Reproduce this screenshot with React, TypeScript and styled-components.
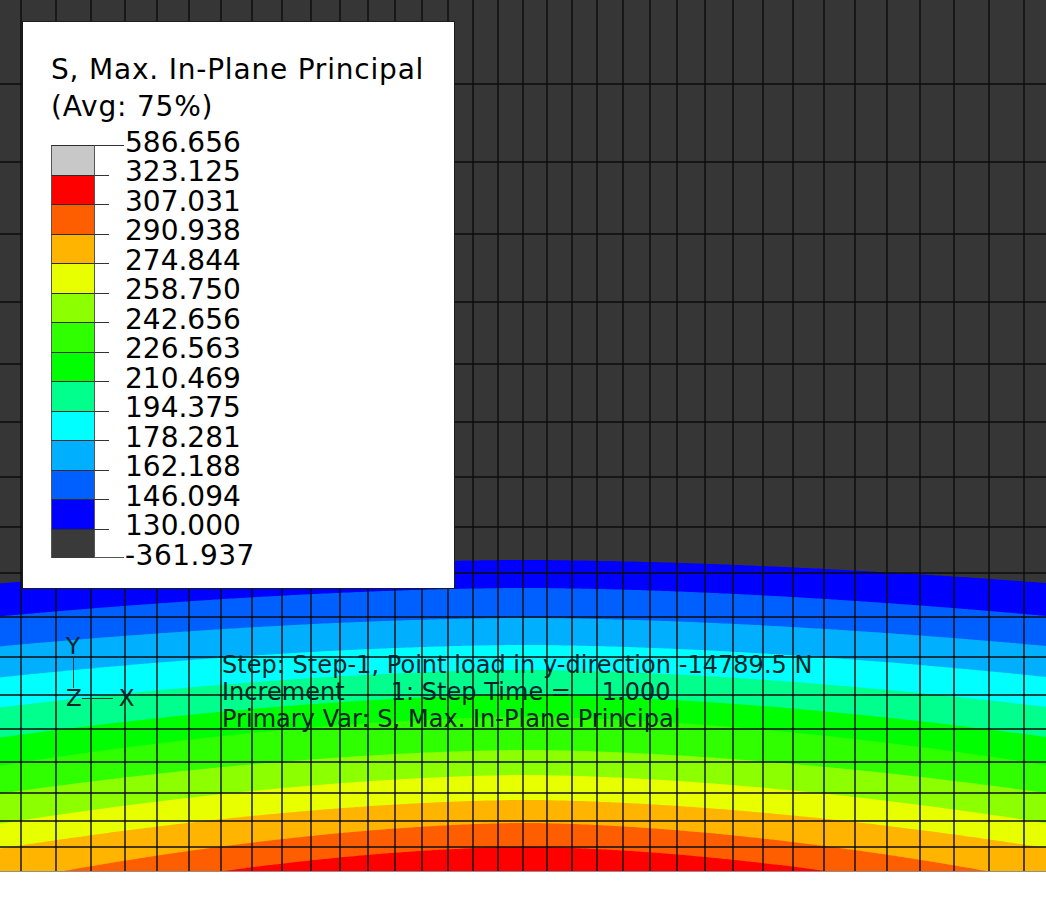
import React from "react";
import styled, { createGlobalStyle } from "styled-components";

const Global = createGlobalStyle`
  html, body { margin: 0; padding: 0; background: #fff; }
  body { font-family: "DejaVu Sans", "Liberation Sans", sans-serif; }
`;

const Page = styled.div`
  width: 1046px;
  height: 899px;
  background: #fff;
  overflow: hidden;
`;

const Viewport = styled.div`
  position: relative;
  width: 1046px;
  height: 872px;
  border-bottom: 1px solid #8f8f8f;
  box-sizing: border-box;
  background: #363636;
  overflow: hidden;
`;

const Plot = styled.svg`
  display: block;
  width: 1046px;
  height: 871px;
`;

const Legend = styled.section`
  position: absolute;
  left: 22px;
  top: 21px;
  width: 433px;
  height: 568px;
  box-sizing: border-box;
  background: #fff;
  border: 1px solid #1c1c1c;
  padding: 29px 0 0 28px;
  color: #000;
`;

const Title = styled.h1`
  margin: 0;
  font-size: 28px;
  font-weight: 400;
  line-height: 37px;
  white-space: nowrap;
  letter-spacing: 0.8px;
`;

const Scale = styled.div`
  display: flex;
  margin-top: 2.5px;
`;

const Bar = styled.div`
  position: relative;
  flex: none;
  width: 44px;
  height: 413px;
  margin-top: 17.5px;
  display: flex;
  flex-direction: column;
  box-shadow: inset 0 -1px 0 #555;

  &::after {
    content: "";
    position: absolute;
    left: 100%;
    bottom: 0;
    width: 29px;
    height: 1px;
    background: #555;
  }
`;

const Swatch = styled.div<{ $fill: string; $long: boolean }>`
  position: relative;
  flex: none;
  height: 29.5px;
  box-sizing: border-box;
  background: ${(p) => p.$fill};
  border-left: 1px solid #555;
  border-right: 1px solid #555;
  border-top: 1px solid #2c2c2c;

  &::after {
    content: "";
    position: absolute;
    left: calc(100% + 1px);
    top: -1px;
    width: ${(p) => (p.$long ? "29px" : "14px")};
    height: 1px;
    background: #333;
  }
`;

const Labels = styled.ol`
  list-style: none;
  margin: 0 0 0 30px;
  padding: 0;
  font-size: 28px;
  line-height: 29.5px;
`;

const MinLabel = styled.li`
  letter-spacing: 0.5px;
`;

const Info = styled.div`
  position: absolute;
  left: 222px;
  top: 652px;
  font-size: 24px;
  line-height: 27px;
  white-space: pre;
  color: #05242a;
  letter-spacing: 0.04px;
`;

const Triad = styled.div`
  position: absolute;
  left: 66px;
  top: 636px;
  display: flex;
  flex-direction: column;
  align-items: flex-start;
  font-size: 23px;
  line-height: 20px;
  color: #05242a;
`;

const TriadStem = styled.div`
  width: 1px;
  height: 32px;
  margin-left: 7px;
  background: #0d3a3a;
`;

const TriadBase = styled.div`
  display: flex;
  align-items: center;
`;

const TriadArm = styled.div`
  width: 31px;
  height: 1px;
  margin: 0 6px 0 0;
  background: #0d3a3a;
`;

const bandColors = [
  "#0000ff", "#0060ff", "#00b0ff", "#00ffff", "#00ff8c", "#00ff00",
  "#30ff00", "#8cff00", "#e8ff00", "#ffb400", "#ff5e00", "#ff0000",
];
const centerY = [560, 588, 618, 645, 670, 695, 717, 750, 775, 800, 823, 847];
const edgeY = [583, 616, 646, 677, 707, 737, 765, 793, 823, 848, 882, 908];

const CX = 525;
const HALF = 521;

function bandPath(i: number): string {
  const pts: string[] = [];
  for (let x = 0; x <= 1046; x += 2) {
    const u = Math.abs(x - CX) / HALF;
    const y = centerY[i] + (edgeY[i] - centerY[i]) * Math.pow(u, 1.7);
    pts.push(`${x},${y.toFixed(1)}`);
  }
  pts.push("1046,872", "0,872");
  return `M${pts.join("L")}Z`;
}

const verticals = [
  21, 56, 91, 125, 157, 189, 221, 252, 282, 311, 340, 368, 395, 422, 448, 473,
  498, 523, 547, 572, 597, 623, 650, 677, 705, 733, 763, 793, 824, 855, 887,
  920, 954, 989, 1024,
];
const horizontals = [
  84, 162, 234, 302, 364, 422, 477, 527, 573, 617, 657, 695, 729, 762, 793,
  821, 847,
];

const levels = [
  { value: "586.656", fill: "#c8c8c8" },
  { value: "323.125", fill: "#ff0000" },
  { value: "307.031", fill: "#ff5e00" },
  { value: "290.938", fill: "#ffb400" },
  { value: "274.844", fill: "#e8ff00" },
  { value: "258.750", fill: "#8cff00" },
  { value: "242.656", fill: "#30ff00" },
  { value: "226.563", fill: "#00ff00" },
  { value: "210.469", fill: "#00ff8c" },
  { value: "194.375", fill: "#00ffff" },
  { value: "178.281", fill: "#00b0ff" },
  { value: "162.188", fill: "#0060ff" },
  { value: "146.094", fill: "#0000ff" },
  { value: "130.000", fill: "#3a3a3a" },
];

export default function App() {
  return (
    <Page>
      <Global />
      <Viewport>
        <Plot viewBox="0 0 1046 871" aria-hidden="true">
          {bandColors.map((c, i) => (
            <path key={c} d={bandPath(i)} fill={c} />
          ))}
          <g stroke="#0c0c0c" strokeWidth="1.4">
            {verticals.map((x) => (
              <line key={x} x1={x} x2={x} y1={0} y2={871} />
            ))}
            {horizontals.map((y) => (
              <line key={y} x1={0} x2={1046} y1={y} y2={y} />
            ))}
          </g>
        </Plot>

        <Triad>
          <span>Y</span>
          <TriadStem />
          <TriadBase>
            <span>Z</span>
            <TriadArm />
            <span>X</span>
          </TriadBase>
        </Triad>

        <Info>
          {"Step: Step-1, Point load in y-direction -14789.5 N\nIncrement      1: Step Time =    1.000\nPrimary Var: S, Max. In-Plane Principal"}
        </Info>

        <Legend>
          <Title>
            S, Max. In-Plane Principal
            <br />
            (Avg: 75%)
          </Title>
          <Scale>
            <Bar>
              {levels.map((l, i) => (
                <Swatch key={l.value} $fill={l.fill} $long={i === 0} />
              ))}
            </Bar>
            <Labels>
              {levels.map((l) => (
                <li key={l.value}>{l.value}</li>
              ))}
              <MinLabel>-361.937</MinLabel>
            </Labels>
          </Scale>
        </Legend>
      </Viewport>
    </Page>
  );
}
